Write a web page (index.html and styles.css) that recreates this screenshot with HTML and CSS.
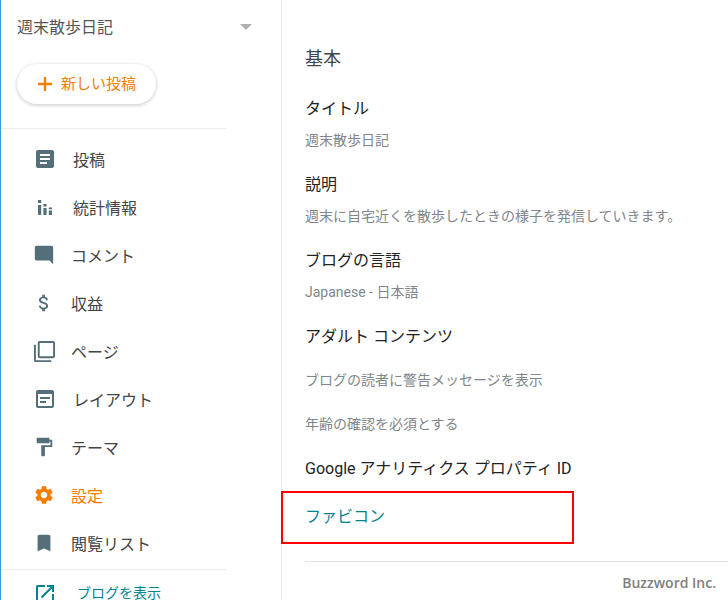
FILE: index.html
```html
<!doctype HTML>
<html>

<head>
    <meta http-equiv="Content-Type" content="text/html;charset=UTF-8">
    <title>週末散歩日記 - 設定</title>
    <link rel="stylesheet" href="styles.css">
</head>

<body>
    <div class="page">
        <!-- Sidebar -->
        <div class="sidebar">
            <div class="blog-picker">
                <span class="blog-name">週末散歩日記</span>
                <span class="caret"></span>
            </div>
            <div class="new-post">
                <svg class="plus" viewBox="0 0 14 14"><path d="M5.8 0h2.4v5.8H14v2.4H8.2V14H5.8V8.2H0V5.8h5.8z"/></svg>
                <span>新しい投稿</span>
            </div>
            <div class="nav">
                <div class="nav-item wide">
                    <span class="nav-icon"><svg width="24" height="24" viewBox="0 0 24 24"><path d="M19 3H5c-1.1 0-2 .9-2 2v14c0 1.1.9 2 2 2h14c1.1 0 2-.9 2-2V5c0-1.1-.9-2-2-2zm-5 14H7v-2h7v2zm3-4H7v-2h10v2zm0-4H7V7h10v2z"/></svg></span>
                    <span>投稿</span>
                </div>
                <div class="nav-item wide">
                    <span class="nav-icon"><svg width="14" height="15" viewBox="0 0 14 15"><path d="M0 0h3.2v3H0zM0 5h3.2v10H0zM5.4 4h3.2v2.4H5.4zM5.4 8h3.2v7H5.4zM10.8 7.4h3.2v1.8h-3.2zM10.8 10.6h3.2V15h-3.2z"/></svg></span>
                    <span>統計情報</span>
                </div>
                <div class="nav-item">
                    <span class="nav-icon"><svg width="22" height="22" viewBox="0 0 24 24"><path d="M21.99 4c0-1.1-.89-2-1.99-2H4c-1.1 0-2 .9-2 2v12c0 1.1.9 2 2 2h14l4 4-.01-18z"/></svg></span>
                    <span>コメント</span>
                </div>
                <div class="nav-item">
                    <span class="nav-icon"><svg width="22" height="22" viewBox="0 0 24 24"><path d="M11.8 10.9c-2.27-.59-3-1.2-3-2.15 0-1.09 1.01-1.85 2.7-1.85 1.78 0 2.44.85 2.5 2.1h2.21c-.07-1.72-1.12-3.3-3.21-3.81V3h-3v2.16c-1.94.42-3.5 1.68-3.5 3.61 0 2.31 1.91 3.46 4.7 4.13 2.5.6 3 1.48 3 2.41 0 .69-.49 1.79-2.7 1.79-2.06 0-2.87-.92-2.98-2.1h-2.2c.12 2.19 1.76 3.42 3.68 3.83V21h3v-2.15c1.95-.37 3.5-1.5 3.5-3.55 0-2.84-2.43-3.81-4.7-4.4z"/></svg></span>
                    <span>収益</span>
                </div>
                <div class="nav-item">
                    <span class="nav-icon"><svg width="23" height="23" viewBox="0 0 24 24"><path d="M3 5H1v16c0 1.1.9 2 2 2h16v-2H3V5zm18-4H7c-1.1 0-2 .9-2 2v14c0 1.1.9 2 2 2h14c1.1 0 2-.9 2-2V3c0-1.1-.9-2-2-2zm0 16H7V3h14v14z"/></svg></span>
                    <span>ページ</span>
                </div>
                <div class="nav-item wide">
                    <span class="nav-icon"><svg width="24" height="24" viewBox="0 0 24 24"><path d="M19 3H5c-1.1 0-2 .9-2 2v14c0 1.1.9 2 2 2h14c1.1 0 2-.9 2-2V5c0-1.1-.9-2-2-2zm0 16H5V7h14v12zm-2-7H7v-2h10v2zm-4 4H7v-2h6v2z"/></svg></span>
                    <span>レイアウト</span>
                </div>
                <div class="nav-item">
                    <span class="nav-icon"><svg width="22" height="22" viewBox="0 0 24 24"><path d="M18 4V3c0-.55-.45-1-1-1H5c-.55 0-1 .45-1 1v4c0 .55.45 1 1 1h12c.55 0 1-.45 1-1V6h1v4H9v11c0 .55.45 1 1 1h2c.55 0 1-.45 1-1v-9h8V4h-3z"/></svg></span>
                    <span>テーマ</span>
                </div>
                <div class="nav-item active">
                    <span class="nav-icon"><svg width="22" height="22" viewBox="0 0 24 24"><path d="M19.14 12.94c.04-.3.06-.61.06-.94 0-.32-.02-.64-.07-.94l2.03-1.58c.18-.14.23-.41.12-.61l-1.92-3.32c-.12-.22-.37-.29-.59-.22l-2.39.96c-.5-.38-1.03-.7-1.62-.94l-.36-2.54c-.04-.24-.24-.41-.48-.41h-3.84c-.24 0-.43.17-.47.41l-.36 2.54c-.59.24-1.13.57-1.62.94l-2.39-.96c-.22-.08-.47 0-.59.22L2.74 8.87c-.12.21-.08.47.12.61l2.03 1.58c-.05.3-.09.63-.09.94s.02.64.07.94l-2.03 1.58c-.18.14-.23.41-.12.61l1.92 3.32c.12.22.37.29.59.22l2.39-.96c.5.38 1.03.7 1.62.94l.36 2.54c.05.24.24.41.48.41h3.84c.24 0 .44-.17.47-.41l.36-2.54c.59-.24 1.13-.56 1.62-.94l2.39.96c.22.08.47 0 .59-.22l1.92-3.32c.12-.22.07-.47-.12-.61l-2.01-1.58zM12 15.6c-1.98 0-3.6-1.62-3.6-3.6s1.62-3.6 3.6-3.6 3.6 1.62 3.6 3.6-1.62 3.6-3.6 3.6z"/></svg></span>
                    <span>設定</span>
                </div>
                <div class="nav-item">
                    <span class="nav-icon"><svg width="22" height="22" viewBox="0 0 24 24"><path d="M17 3H7c-1.1 0-1.99.9-1.99 2L5 21l7-3 7 3V5c0-1.1-.9-2-2-2z"/></svg></span>
                    <span>閲覧リスト</span>
                </div>
            </div>
            <div class="view-blog">
                <span class="nav-icon"><svg width="24" height="24" viewBox="0 0 24 24"><path d="M19 19H5V5h7V3H5c-1.11 0-2 .9-2 2v14c0 1.1.89 2 2 2h14c1.1 0 2-.9 2-2v-7h-2v7zM14 3v2h3.59l-9.83 9.83 1.41 1.41L19 6.41V10h2V3h-7z"/></svg></span>
                <span class="view-label">ブログを表示</span>
            </div>
        </div>

        <!-- Settings -->
        <div class="content">
            <div class="section-title">基本</div>
            <div class="group first">
                <div class="row">タイトル</div>
                <div class="row value">週末散歩日記</div>
            </div>
            <div class="group">
                <div class="row">説明</div>
                <div class="row value">週末に自宅近くを散歩したときの様子を発信していきます。</div>
            </div>
            <div class="group">
                <div class="row">ブログの言語</div>
                <div class="row value">Japanese - 日本語</div>
            </div>
            <div class="group">
                <div class="row">アダルト コンテンツ</div>
            </div>
            <div class="group">
                <div class="row value">ブログの読者に警告メッセージを表示</div>
            </div>
            <div class="group">
                <div class="row value">年齢の確認を必須とする</div>
            </div>
            <div class="group">
                <div class="row">Google アナリティクス プロパティ ID</div>
            </div>
            <div class="group favicon">
                <div class="row link">ファビコン</div>
            </div>
            <div class="rule"></div>
        </div>

        <!-- Annotation and watermark lie over the page -->
        <div class="highlight"></div>
        <div class="watermark">Buzzword Inc.</div>
    </div>
</body>

</html>
```

FILE: styles.css
```css
/* Page frame */

html, body {
    margin: 0;
    height: 100%;
    overflow: hidden;
}

body {
    font-family: Roboto, "Noto Sans CJK JP", sans-serif;
    font-size: 16px;
    color: #3c4043;
    background-color: #fff;
}

.page {
    position: relative;
    display: flex;
    height: 600px;
    overflow: hidden;
}

/* Sidebar */

.sidebar {
    flex: 0 0 280px;
    width: 280px;
    height: 600px;
    border-left: 1px solid #3d9bd6;
    border-right: 1px solid #e8e8e8;
    box-sizing: content-box;
}

.blog-picker {
    display: flex;
    align-items: center;
    justify-content: space-between;
    height: 24px;
    padding: 14px 29px 1px 16px;
    color: #555;
}

.caret {
    width: 0;
    height: 0;
    border-left: 6px solid transparent;
    border-right: 6px solid transparent;
    border-top: 6px solid #b0b0b0;
    margin-top: 2px;
}

.new-post {
    display: flex;
    align-items: center;
    gap: 9px;
    width: 139px;
    height: 40px;
    box-sizing: border-box;
    margin: 25px 0 0 16px;
    padding: 0 0 3px 21px;
    font-size: 15px;
    color: #f57c00;
    border-radius: 20px;
    box-shadow: 0 1px 3px 1px rgba(60, 64, 67, 0.2);
}

.plus {
    width: 14px;
    height: 14px;
    margin-top: 3px;
    fill: #f57c00;
}

.nav {
    width: 225px;
    margin-top: 24px;
    padding-bottom: 2px;
    border-top: 1px solid #e8edf2;
    border-bottom: 1px solid #ebebeb;
    padding-top: 6px;
}

.nav-item {
    display: flex;
    align-items: center;
    height: 48px;
    padding-left: 30px;
    color: #444;
}

.nav-item.wide {
    padding-left: 31px;
}

.nav-item.wide .nav-icon {
    margin-right: 15px;
}

.nav-item.active {
    color: #f57c00;
}

.nav-icon {
    display: flex;
    align-items: center;
    justify-content: center;
    flex: 0 0 26px;
    width: 26px;
    margin-right: 14px;
    fill: #546e7a;
}

.active .nav-icon {
    fill: #f57c00;
}

.view-blog {
    display: flex;
    align-items: center;
    height: 48px;
    padding-left: 31px;
    font-size: 14px;
    color: #00838f;
}

.view-blog .nav-icon {
    fill: #00838f;
    margin-right: 19px;
}

.view-label {
    margin-bottom: 4px;
}

/* Settings */

.content {
    flex: 1;
    display: flex;
    flex-direction: column;
    gap: 12px;
    padding: 43px 0 0 23px;
}

.section-title {
    height: 32px;
    line-height: 32px;
    font-size: 18px;
    color: #444;
}

.group.first {
    margin-top: 6px;
}

.group.favicon {
    margin-top: 4px;
}

.row {
    height: 32px;
    line-height: 32px;
    color: #222;
    white-space: nowrap;
}

.row.value {
    font-size: 14px;
    line-height: 30px;
    color: #80868b;
}

.row.link {
    color: #00838f;
}

.rule {
    margin-top: 16px;
    height: 1px;
    background-color: #e0e0e0;
}

/* Overlays */

.highlight {
    position: absolute;
    left: 281px;
    top: 491px;
    width: 289px;
    height: 49px;
    border: 2px solid #f00;
}

.watermark {
    position: absolute;
    right: 12px;
    top: 573px;
    font-family: "Open Sans", "Noto Sans", sans-serif;
    font-size: 14px;
    font-weight: 600;
    color: #808080;
}
```
